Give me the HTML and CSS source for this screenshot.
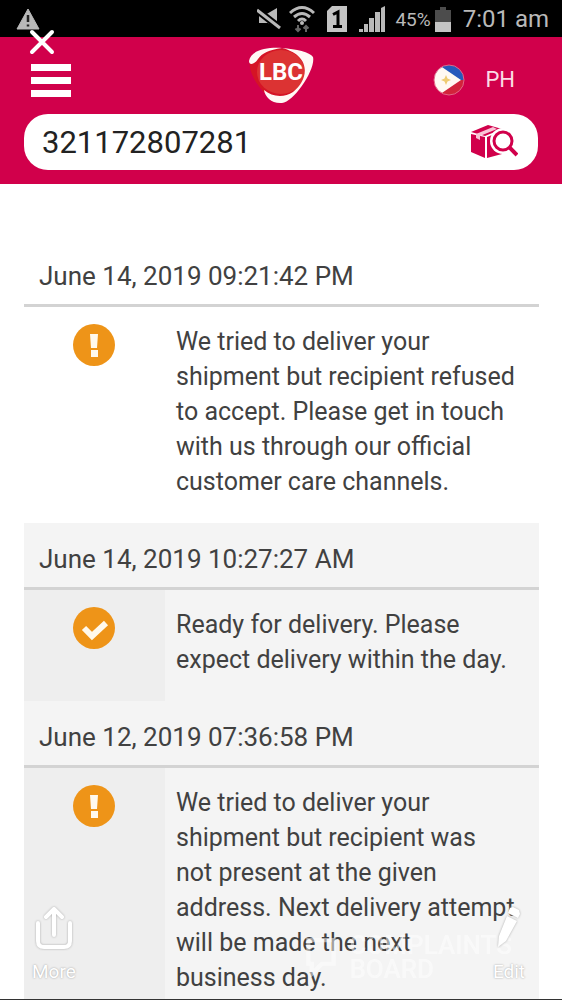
FILE: index.html
```html
<!DOCTYPE html>
<html lang="en">
<head>
<meta charset="utf-8">
<meta name="viewport" content="width=device-width, initial-scale=1">
<title>LBC Track Shipment</title>
<link rel="stylesheet" href="styles.css">
</head>
<body>
<div class="screen">
  <div class="status-bar">
    <svg class="status-warning" width="24" height="22" viewBox="0 0 24 22" aria-hidden="true"><path d="M12 1 23 21H1z" fill="#b9b9b9" stroke="#b9b9b9" stroke-linejoin="round"/><path d="M12 7v7M12 16.500v2" stroke="#222" stroke-width="2.500"/></svg>
    <div class="status-icons">
      <svg width="24" height="22" viewBox="0 0 24 22" aria-hidden="true"><path d="M2 7h6l12-7v20L11 15H2z" fill="#b9b9b9"/><path d="M0 2 23 20" stroke="#000" stroke-width="7"/><path d="M0 2 23 20" stroke="#b9b9b9" stroke-width="3"/></svg>
      <svg width="26" height="28" viewBox="0 0 26 28" fill="none" stroke="#b9b9b9" stroke-width="3" aria-hidden="true"><path d="M1 8Q13-3 25 8M5 12q8-7 16 0M9 16q4-4 8 0"/><circle cx="13" cy="18" r="2" fill="#b9b9b9" stroke="none"/><path d="M9 20v6M6.500 23.500 9 26l2.500-2.500M17 27v-6M14.500 23.500 17 21l2.500 2.500" stroke="#666" stroke-width="2"/></svg>
      <svg width="20" height="26" viewBox="0 0 20 26" aria-hidden="true"><path d="M5 0h15v26H0V5z" fill="#c4c4c4"/><path d="M6 8.500 11 6v15M6 20.500h9" fill="none" stroke="#000" stroke-width="3"/></svg>
      <svg width="26" height="26" viewBox="0 0 26 26" fill="#b9b9b9" aria-hidden="true"><path d="M0 23h4v3H0zM5 18h4v8H5zM10 12h5v14h-5zM16 6h5v20h-5zM22 2l4-2v26h-4z"/></svg>
      <span class="battery-level">45%</span>
      <svg width="16" height="25" viewBox="0 0 16 25" aria-hidden="true"><path d="M5 0h6v3h5v12H0V3h5z" fill="#4c4c4c"/><path d="M0 15h16v10H0z" fill="#c4c4c4"/></svg>
    </div>
    <span class="clock">7:01 am</span>
  </div>

  <header class="site-header">
    <div class="header-row">
      <button class="menu-button" type="button" aria-label="Menu"><span></span><span></span><span></span></button>
      <a class="logo" href="#" aria-label="LBC home">
        <svg width="68" height="60" viewBox="0 0 68 60"><path d="M3 15C9-1 57-1 64 12c5 9-16 44-29 44C20 56 0 29 3 15z" fill="#d51425"/><ellipse cx="34" cy="26" rx="24" ry="22" fill="#dc3333"/><path d="M2 15C4 4 20 1 35 2 22 4 15 7 11 13c-3 5-9 7-9 2zM35 2c14 1 28 4 31 9 3 12-19 45-31 46-10 1-17-6-18-13 8 7 20 8 29 2C61 35 66 10 35 2z" fill="#fff8f5"/><text x="34" y="34" class="logo-text">LBC</text></svg>
      </a>
      <button class="country-button" type="button">
        <svg width="32" height="32" viewBox="0 0 32 32" aria-hidden="true"><defs><clipPath id="flag-clip"><circle cx="16" cy="16" r="15"/></clipPath></defs><g clip-path="url(#flag-clip)"><path d="M0 0h32v16H0z" fill="#2759bb"/><path d="M0 16h32v16H0z" fill="#d2233b"/><path d="M3-1 28 16 3 33H-2V-1z" fill="#fff9f2"/><path d="m13 11 1.500 3.500L18 16l-3.500 1.500L13 21l-1.500-3.500L8 16l3.500-1.500z" fill="#efcc72"/></g><circle cx="16" cy="16" r="15" fill="none" stroke="#e36687"/></svg>
        <span>PH</span>
      </button>
    </div>
    <form class="search">
      <input class="search-input" type="text" value="321172807281" aria-label="Tracking number">
      <button class="search-button" type="button" aria-label="Track">
        <svg width="48" height="36" viewBox="0 0 48 36"><path d="M1 10 15 13v21L1 28z" fill="#d1004b"/><path d="M1 8 18 1 32 5 15 12z" fill="#d1004b"/><path d="M17 13 32 7v23l-15 4z" fill="#d1004b"/><path d="m6 10 17-7 4 2-17 7v4l-4-2z" fill="#f9c5d7"/><circle cx="33" cy="17" r="13" fill="#fff"/><circle cx="33" cy="17" r="9" fill="#fff" stroke="#d1004b" stroke-width="3"/><path d="m39 23 8 8" stroke="#d1004b" stroke-width="4"/></svg>
      </button>
    </form>
  </header>

  <main class="timeline">
    <section class="entry">
      <h2 class="entry-date">June 14, 2019 09:21:42 PM</h2>
      <div class="entry-body">
        <div class="entry-icon"><svg width="42" height="42" viewBox="0 0 42 42" role="img" aria-label="Attention"><circle cx="21" cy="21" r="21" fill="#ee9418"/><path d="M17 10h8l-1 14h-6zM18 26h7v7h-7z" fill="#fff9ed"/></svg></div>
        <p class="entry-text">We tried to deliver your shipment but recipient refused to accept. Please get in touch with us through our official customer care channels.</p>
      </div>
    </section>
    <section class="entry shaded">
      <h2 class="entry-date">June 14, 2019 10:27:27 AM</h2>
      <div class="entry-body">
        <div class="entry-icon"><svg width="42" height="42" viewBox="0 0 42 42" role="img" aria-label="Completed"><circle cx="21" cy="21" r="21" fill="#ee9418"/><path d="m11 21 8 8 14-13" fill="none" stroke="#fff9ed" stroke-width="6"/></svg></div>
        <p class="entry-text">Ready for delivery. Please expect delivery within the day.</p>
      </div>
    </section>
    <section class="entry shaded">
      <h2 class="entry-date">June 12, 2019 07:36:58 PM</h2>
      <div class="entry-body">
        <div class="entry-icon"><svg width="42" height="42" viewBox="0 0 42 42" role="img" aria-label="Attention"><circle cx="21" cy="21" r="21" fill="#ee9418"/><path d="M17 10h8l-1 14h-6zM18 26h7v7h-7z" fill="#fff9ed"/></svg></div>
        <p class="entry-text">We tried to deliver your shipment but recipient was not present at the given address. Next delivery attempt will be made the next business day.</p>
      </div>
    </section>
  </main>

  <button class="close-button" type="button" aria-label="Close"><svg width="26" height="26" viewBox="0 0 26 26"><path d="m3 3 20 20M23 3 3 23" stroke="#fff" stroke-width="4" stroke-linecap="round"/></svg></button>
  <div class="watermark"><svg width="32" height="40" viewBox="0 0 38 44" aria-hidden="true"><path d="M4 2h30v28H20L8 42V30H4z" fill="none" stroke="#fff" stroke-width="5"/></svg><span>COMPLAINTS<br>BOARD</span></div>
  <div class="viewer-actions">
    <button class="viewer-button" type="button">
      <svg width="38" height="44" viewBox="0 0 38 44" fill="none" stroke="#fff" stroke-width="4" stroke-linecap="round" stroke-linejoin="round" aria-hidden="true"><path d="M3 17v18q0 6 6 6h20q6 0 6-6V17M19 29V4M11 11l8-8 8 8"/></svg>
      <span>More</span>
    </button>
    <button class="viewer-button" type="button">
      <svg width="38" height="44" viewBox="0 0 38 44" fill="#fff" aria-hidden="true"><path d="m20 2 3-1 6 3 1 4-2 4-10-5zM17 10l10 5-11 20-8 6 1-11z"/></svg>
      <span>Edit</span>
    </button>
  </div>
</div>
</body>
</html>
```
FILE: styles.css
```css
* {
  box-sizing: border-box;
}

body {
  margin: 0;
  background: #fff;
  color: #414141;
  font-family: Roboto, "Liberation Sans", sans-serif;
}

button {
  padding: 0;
  border: 0;
  background: none;
  color: inherit;
  font: inherit;
}

svg {
  display: block;
  flex: none;
}

.screen {
  position: relative;
  height: 100vh;
  overflow: hidden;
  border-bottom: 1px solid #333;
}

.status-bar {
  display: flex;
  align-items: center;
  height: 37px;
  padding: 1px 13px 0 16px;
  background: #000;
  color: #b9b9b9;
}

.status-icons {
  display: flex;
  align-items: center;
  gap: 8px;
  margin-left: auto;
}

.status-icons svg:nth-of-type(3) {
  margin: 0 4px;
}

.status-icons svg:nth-of-type(4) {
  margin-right: 2px;
}

.battery-level {
  margin-right: -4px;
  font-size: 19px;
}

.clock {
  margin-left: 12px;
  font-size: 24px;
}

.site-header {
  padding: 0 24px 14px;
  background: #d1004b;
}

.header-row {
  display: grid;
  grid-template-columns: 1fr auto 1fr;
  align-items: center;
  height: 77px;
  padding: 0 7px;
}

.menu-button {
  display: grid;
  gap: 6px;
  width: 40px;
  margin-top: 10px;
}

.menu-button span {
  height: 7px;
  background: #fff;
}

.country-button {
  display: flex;
  align-items: center;
  justify-self: end;
  gap: 20px;
  margin-top: 8px;
  margin-right: 16px;
  color: #fbdce6;
  font-size: 22px;
}

.logo-text {
  fill: #fff;
  font-size: 24px;
  font-weight: 700;
  text-anchor: middle;
}

.search {
  display: flex;
  align-items: center;
  height: 56px;
  padding: 0 20px 0 18px;
  border-radius: 24px;
  background: #fff;
}

.search-input {
  flex: 1;
  min-width: 0;
  padding: 0;
  border: 0;
  outline: 0;
  background: none;
  color: #222;
  font: 31px Roboto, "Liberation Sans", sans-serif;
}

.timeline {
  padding: 56px 23px 0 24px;
}

.shaded {
  background: #f4f4f4;
}

.entry-date {
  height: 67px;
  margin: 0;
  padding: 6px 15px 0;
  border-bottom: 3px solid #d3d3d3;
  font-size: 26px;
  font-weight: 400;
  line-height: 60px;
}

.entry-body {
  display: grid;
  grid-template-columns: 141px 1fr;
}

.entry-icon {
  display: flex;
  justify-content: center;
  padding: 17px 2px 0 0;
}

.shaded .entry-icon {
  background: #eee;
}

.entry-text {
  margin: 0;
  padding: 17px 23px 24px 11px;
  font-size: 25px;
  line-height: 35px;
}

.close-button {
  position: absolute;
  top: 29px;
  left: 29px;
}

.watermark {
  position: absolute;
  right: 50px;
  bottom: 18px;
  display: flex;
  align-items: center;
  gap: 12px;
  color: #fff;
  font-size: 26px;
  font-weight: 500;
  line-height: 24px;
  opacity: 0.5;
}

.viewer-actions {
  position: absolute;
  right: 34px;
  bottom: 16px;
  left: 32px;
  display: flex;
  justify-content: space-between;
}

.viewer-button {
  display: grid;
  justify-items: center;
  gap: 10px;
  color: #fff;
  font-size: 19px;
  text-shadow: 0 0 2px #999;
}

.viewer-button svg {
  filter: drop-shadow(0 0 1px #aaa);
}
```
